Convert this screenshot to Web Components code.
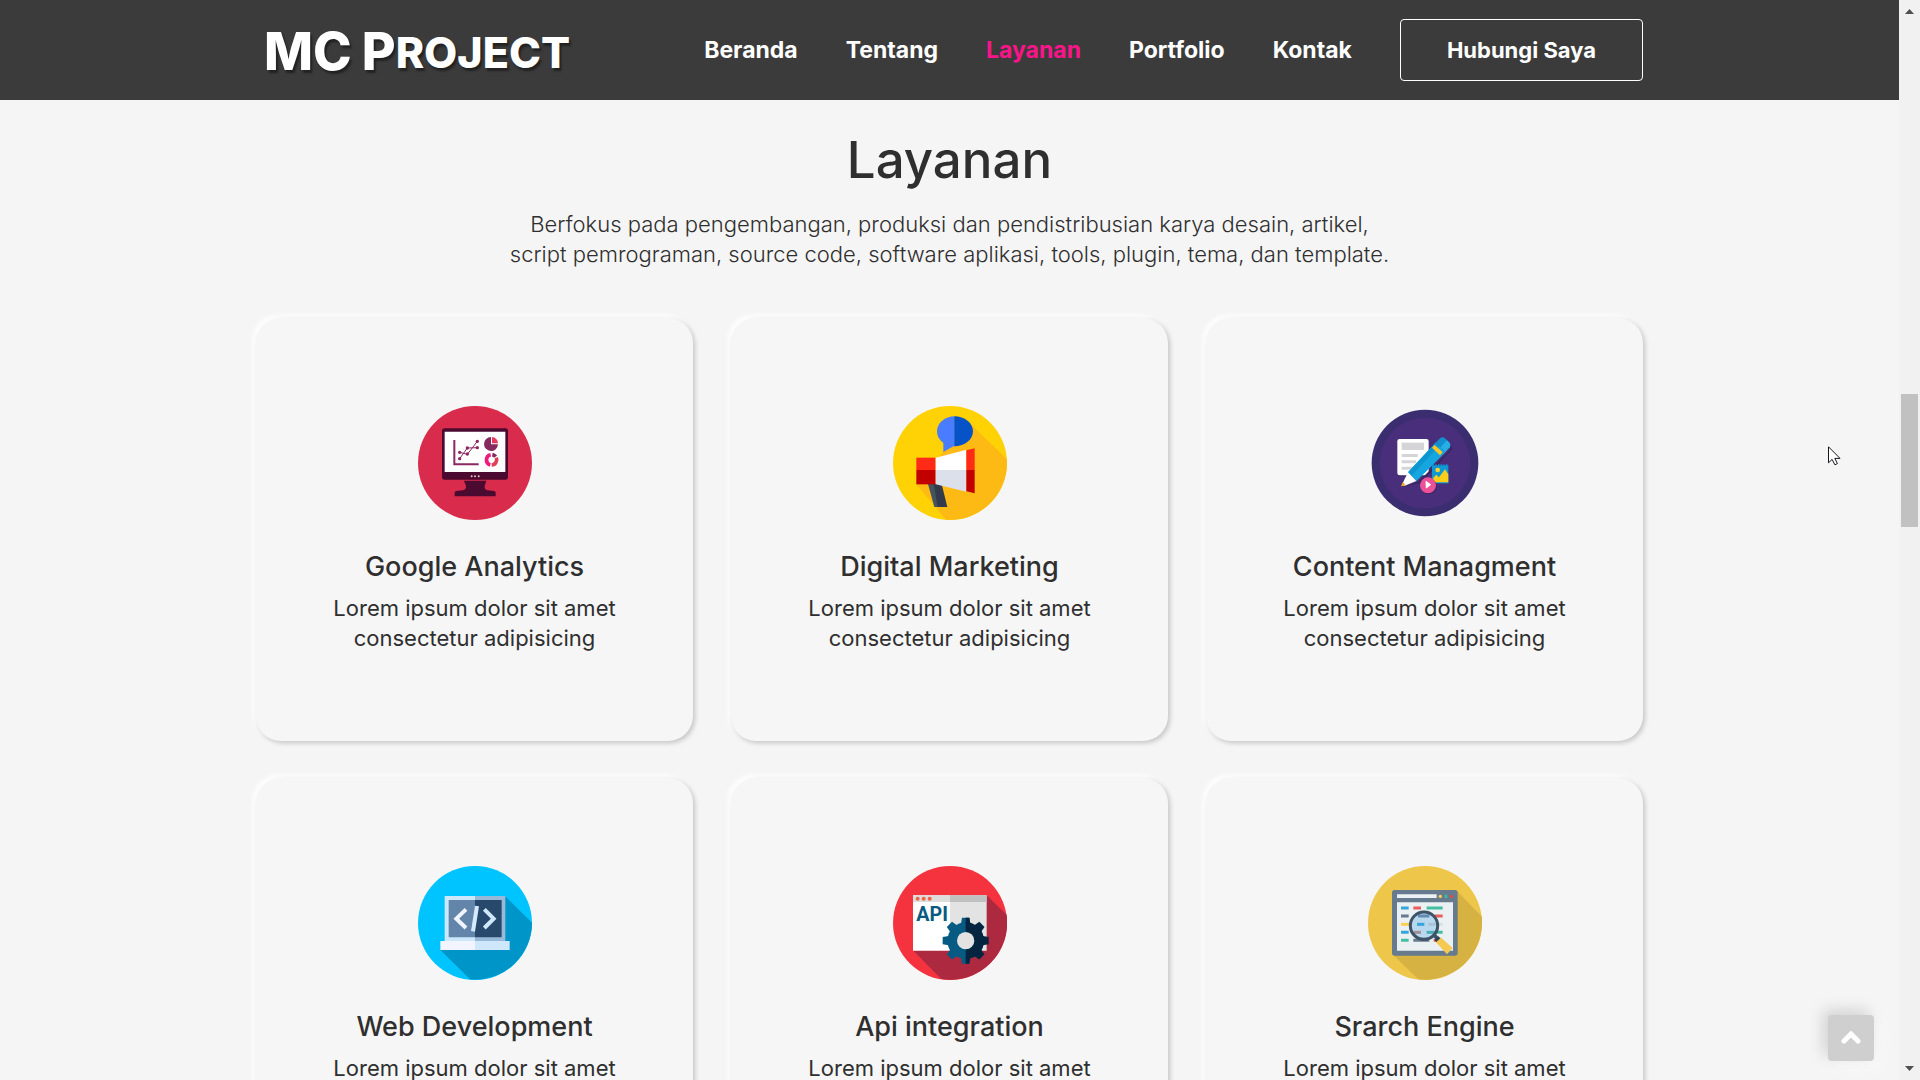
<!DOCTYPE html>
<html lang="id">
<head>
<meta charset="utf-8">
<meta name="viewport" content="width=device-width, initial-scale=1">
<title>MC Project - Layanan</title>
<style>
    body {
        margin: 0;
        font-family: Inter, "Open Sans", sans-serif;
        color: #2f2f2f;
        background: #f5f5f5;
    }
</style>
</head>
<body>
<page-shell>
    <site-header slot="header">
        <nav-link href="#beranda">Beranda</nav-link>
        <nav-link href="#tentang">Tentang</nav-link>
        <nav-link href="#layanan" active>Layanan</nav-link>
        <nav-link href="#portfolio">Portfolio</nav-link>
        <nav-link href="#kontak">Kontak</nav-link>
    </site-header>
    <services-section id="layanan">
        <span slot="title">Layanan</span>
        <span slot="lead">Berfokus pada pengembangan, produksi dan pendistribusian karya desain, artikel,<br>script pemrograman, source code, software aplikasi, tools, plugin, tema, dan template.</span>
        <service-card icon="analytics" name="Google Analytics">Lorem ipsum dolor sit amet consectetur adipisicing</service-card>
        <service-card icon="marketing" name="Digital Marketing">Lorem ipsum dolor sit amet consectetur adipisicing</service-card>
        <service-card icon="content" name="Content Managment">Lorem ipsum dolor sit amet consectetur adipisicing</service-card>
        <service-card icon="web" name="Web Development">Lorem ipsum dolor sit amet consectetur adipisicing</service-card>
        <service-card icon="api" name="Api integration">Lorem ipsum dolor sit amet consectetur adipisicing</service-card>
        <service-card icon="search" name="Srarch Engine">Lorem ipsum dolor sit amet consectetur adipisicing</service-card>
    </services-section>
</page-shell>

<script>
const icons = {
    analytics: `
        <circle cx="225" cy="219" r="171" fill="#d92b4b"/>
        <path d="M164 319v-11q0-4 5-5l19-2q12-3 10-13l-6-16h67l-5 16q-2 10 9 13l19 2q5 1 5 5v11z" fill="#4b0a2f"/>
        <rect x="126" y="115" width="198" height="154" rx="8" fill="#4b0a2f"/>
        <path d="M134 125h182v121H134z" fill="#fff"/>
        <path d="M163 150v73h73" fill="none" stroke="#8c2762" stroke-width="6"/>
        <path d="M179 187l23 6 30-39M179 206l23-32 30-1" fill="none" stroke="#8c2762" stroke-width="3"/>
        <g fill="#8c2762"><circle cx="179" cy="187" r="5"/><circle cx="179" cy="206" r="5"/><circle cx="202" cy="174" r="5"/><circle cx="202" cy="192" r="5"/><circle cx="232" cy="154" r="5"/><circle cx="232" cy="173" r="5"/></g>
        <path d="M273 141a21 21 0 1 0 21 22h-21z" fill="#842a5e"/>
        <path d="M276 160v-19a19 19 0 0 1 18 19z" fill="#e63a5c"/>
        <g fill="none" stroke-width="11"><path d="M271 225a16 16 0 0 1 1-31" stroke="#f0197d"/><path d="M277 194a16 16 0 0 1 10 6" stroke="#842a5e"/><path d="M289 203a16 16 0 0 1-14 22" stroke="#df4055"/></g>
        <g fill="#e6c9c4"><circle cx="215" cy="259" r="3"/><circle cx="225" cy="259" r="3"/><circle cx="236" cy="259" r="3"/></g>`,
    marketing: `
        <circle cx="225" cy="219" r="171" fill="#ffd206"/>
        <path d="M290 106l106 102v11a171 171 0 0 1-183 170L124 283l82-98z" fill="#fdb914"/>
        <path d="M239 79c-29 0-53 20-53 45 0 15 8 27 19 35v27l30-17h4z" fill="#4a7cff"/>
        <path d="M238 79c31 0 56 20 56 45s-25 45-56 45z" fill="#0653c7"/>
        <path d="M159 282h23l16 69h-20z" fill="#44545e"/>
        <path d="M176 282h24l17 69h-29z" fill="#333b4b"/>
        <path d="M124 203h58v37h-58z" fill="#ff2b16"/>
        <path d="M124 240h58v43h-58z" fill="#c20000"/>
        <path d="M182 203l92-24v61h-92z" fill="#fff"/>
        <path d="M182 240h92v65l-92-22z" fill="#dbe0eb"/>
        <path d="M274 181l25-6v65h-25z" fill="#ff2b16"/>
        <path d="M274 240h25v70l-25-6z" fill="#c20000"/>`,
    content: `
        <circle cx="225" cy="219" r="160" fill="#3a2d70"/>
        <circle cx="225" cy="219" r="136" fill="#492f7b"/>
        <path d="M146 259h84l8-6-5-5-18 5-66 1z" fill="#35265f"/>
        <rect x="142" y="147" width="94" height="109" rx="7" fill="#fff"/>
        <path d="M155 158h67v22h-67z" fill="#d5d5d8"/>
        <path d="M155 192h48v9h-48zM155 211h43v9h-43zM155 230h40v9h-40z" fill="#d5d5d8"/>
        <path d="M160 291l44-15 96-95 2-14 6 9-96 103z" fill="#35265f"/>
        <path d="M174 247l84-90 29 29-88 88z" fill="#16a6df"/>
        <path d="M174 247l84-90 10 10-84 91z" fill="#0b96cf"/>
        <path d="M258 157l14-14q6-3 12 1l15 15q4 6 0 13l-13 14z" fill="#118fce"/>
        <path d="M272 171l19-20 8 8q4 6 0 13l-13 14z" fill="#27afe5"/>
        <path d="M246 173l8-8 24 22-8 9z" fill="#fbc625"/>
        <path d="M174 247l25 26-35 14-9-1z" fill="#fff"/>
        <path d="M159 276l8 10-14 3z" fill="#f3af1a"/>
        <path d="M246 226h49v54h-49z" fill="#0e99d5"/>
        <path d="M248 225h46" stroke="#0e99d5" stroke-width="5" stroke-dasharray="4 4"/>
        <circle cx="263" cy="240" r="7" fill="#fbd12b"/>
        <path d="M250 277v-14l9-9 8 8 18-24 10 15v24z" fill="#fbce19"/>
        <circle cx="236" cy="289" r="24" fill="#35265f"/>
        <circle cx="234" cy="286" r="24" fill="#ec5197"/>
        <path d="M228 274l14 10-13 10z" fill="#fff" stroke="#fff" stroke-width="3" stroke-linejoin="round"/>`,
    web: `
        <circle cx="225" cy="219" r="171" fill="#00c4ff"/>
        <path d="M316 139l80 79a171 171 0 0 1-186 170l-89-88z" fill="#0095c8"/>
        <path d="M134 138h91v136h-91z" fill="#cee8fb"/>
        <path d="M225 138h91v136h-91z" fill="#98bad8"/>
        <path d="M146 150h79v112h-79z" fill="#6385a9"/>
        <path d="M225 150h80v112h-80z" fill="#29496c"/>
        <path d="M121 273h104v27H121z" fill="#f2f4fe"/>
        <path d="M225 273h104v27H225z" fill="#cfe7fa"/>
        <path d="M198 178l-29 28 29 28" fill="none" stroke="#f2f5ff" stroke-width="12"/>
        <path d="M253 178l28 28-28 28" fill="none" stroke="#cfe7fa" stroke-width="12"/>
        <path d="M231 168l-12 76" stroke="#d5eaff" stroke-width="12"/>`,
    api: `
        <circle cx="225" cy="219" r="171" fill="#f4333f"/>
        <path d="M335 136l60 58a171 171 0 0 1-196 193l-84-85z" fill="#ad2940"/>
        <path d="M114 136h111v166H114z" fill="#fff"/>
        <path d="M225 136h110v166H225z" fill="#e3e3e3"/>
        <path d="M114 136h111v20H114z" fill="#ddd"/>
        <path d="M225 136h110v20H225z" fill="#c0c0c0"/>
        <g fill="#f06446"><circle cx="128" cy="146" r="6"/><circle cx="146" cy="146" r="6"/><circle cx="164" cy="146" r="6"/></g>
        <text x="124" y="213" font-family="Roboto, sans-serif" font-size="59" font-weight="700" fill="#075b82">API</text>
        <g transform="translate(272 272)">
            <circle r="55" fill="#075b82"/>
            <g fill="#075b82">
                <path d="M-14-51l3-18h22l3 18z"/><path d="M-14-51l3-18h22l3 18z" transform="rotate(180)"/><path d="M-14-51l3-18h22l3 18z" transform="rotate(-90)"/><path d="M-14-51l3-18h22l3 18z" transform="rotate(-45)"/><path d="M-14-51l3-18h22l3 18z" transform="rotate(-135)"/>
            </g>
            <g fill="#03253f">
                <path d="M0-55a55 55 0 0 1 0 110z"/><path d="M0-69h11l3 18H0z"/><path d="M0 69h11l3-18H0z"/><path d="M-14-51l3-18h22l3 18z" transform="rotate(90)"/><path d="M-14-51l3-18h22l3 18z" transform="rotate(45)"/><path d="M-14-51l3-18h22l3 18z" transform="rotate(135)"/>
            </g>
            <circle r="26" fill="#e3e3e3"/>
        </g>`,
    search: `
        <circle cx="225" cy="219" r="171" fill="#eec64a"/>
        <path d="M322 124l74 76v19a171 171 0 0 1-191 169l-76-74z" fill="#d6b243"/>
        <rect x="126" y="120" width="197" height="197" rx="8" fill="#667b8d"/>
        <path d="M141 133h119v11H141z" fill="#ebf0f3"/>
        <circle cx="271" cy="139" r="5" fill="#fbcf53"/><path d="M284 134h8v10h-8z" fill="#3ebc9d"/><circle cx="304" cy="139" r="5" fill="#e5484f"/>
        <path d="M141 157h168v145H141z" fill="#ebf0f3"/>
        <g stroke-width="9">
            <path d="M153 174h23M153 247h23" stroke="#35a5dc"/>
            <path d="M190 174h23M254 198h24M251 271h14" stroke="#ec5d5d"/>
            <path d="M230 174h48M230 247h48M153 271h23" stroke="#45bfa3"/>
            <path d="M153 198h23M190 271h48" stroke="#667b8d"/>
            <path d="M153 223h32" stroke="#fbcf53"/>
            <path d="M254 223h24" stroke="#d8dee3"/>
        </g>
        <circle cx="222" cy="227" r="42" fill="#b8d9ed"/>
        <g stroke-width="9"><path d="M204 198h34" stroke="#628bb4"/><path d="M201 223h22" stroke="#35a5dc"/><path d="M235 223h22" stroke="#a9c3d5"/><path d="M192 247h21" stroke="#a58e95"/><path d="M230 247h27" stroke="#48aeb4"/></g>
        <circle cx="222" cy="227" r="41" fill="none" stroke="#3e5368" stroke-width="9"/>
        <path d="M251 254l14 14" stroke="#3e5368" stroke-width="11"/>
        <path d="M257 276l15-14 36 32-17 19z" fill="#f6c952"/>
        <path d="M253 270l12-11 6 6-12 11z" fill="#2f4357"/>`
};

function render(element, markup) {
    const template = document.createElement('template');
    template.innerHTML = markup;
    element.attachShadow({mode: 'open'}).appendChild(template.content.cloneNode(true));
}

class PageShell extends HTMLElement {
    connectedCallback() {
        render(this, `
            <style>
                :host {
                    display: grid;
                    grid-template-columns: minmax(0, 1fr) 21px;
                    height: 100vh;
                    overflow: hidden;
                }
                .view {
                    position: relative;
                    display: flex;
                    flex-direction: column;
                    min-height: 0;
                    overflow: hidden;
                }
                main {
                    flex: 1;
                    min-height: 0;
                    overflow: hidden;
                }
                to-top {
                    position: absolute;
                    right: 25px;
                    bottom: 19px;
                }
                .cursor {
                    position: absolute;
                    right: 58px;
                    top: 446px;
                }
            </style>
            <div class="view">
                <slot name="header"></slot>
                <main><slot></slot></main>
                <to-top></to-top>
                <svg class="cursor" width="13" height="20" viewBox="0 0 13 20" aria-hidden="true">
                    <path d="M.5.8v16l3.600-3.400 2.800 5.400 2.500-1.200-2.600-5.200h5.200z" fill="#fff" stroke="#16161d"/>
                </svg>
            </div>
            <scroll-rail></scroll-rail>
        `);
    }
}

class SiteHeader extends HTMLElement {
    connectedCallback() {
        render(this, `
            <style>
                :host {
                    display: block;
                    flex: none;
                    background: #3b3b3b;
                    color: #fff;
                }
                header {
                    display: flex;
                    align-items: center;
                    justify-content: space-between;
                    box-sizing: border-box;
                    max-width: 1387px;
                    min-height: 100px;
                    margin: 0 auto;
                }
                .logo {
                    display: flex;
                    align-items: flex-start;
                    margin-left: 8px;
                    padding-top: 4px;
                    font: 800 52px/52px Inter, sans-serif;
                    color: inherit;
                    text-decoration: none;
                    text-shadow: 2px 3px 2px #222;
                }
                .logo .first {
                    margin-right: 10px;
                }
                .logo .small {
                    font-size: 43px;
                    line-height: 52px;
                    text-transform: uppercase;
                }
                nav {
                    display: flex;
                    align-items: center;
                    gap: 48px;
                }
                .contact {
                    box-sizing: border-box;
                    padding: 15px 46px;
                    border: 1px solid #fff;
                    border-radius: 4px;
                    font-size: 22px;
                    font-weight: 700;
                    line-height: 30px;
                    color: inherit;
                    text-decoration: none;
                }
            </style>
            <header>
                <a class="logo" href="#beranda"><span class="first">MC</span><span>P</span><span class="small">roject</span></a>
                <nav>
                    <slot></slot>
                    <a class="contact" href="#kontak">Hubungi Saya</a>
                </nav>
            </header>
        `);
    }
}

class NavLink extends HTMLElement {
    connectedCallback() {
        render(this, `
            <style>
                :host {
                    display: block;
                }
                a {
                    font-size: 23px;
                    font-weight: 700;
                    line-height: 30px;
                    color: #fff;
                    text-decoration: none;
                }
                :host([active]) a {
                    color: #f9148a;
                }
            </style>
            <a href="${this.getAttribute('href')}"><slot></slot></a>
        `);
    }
}

class ServicesSection extends HTMLElement {
    connectedCallback() {
        render(this, `
            <style>
                :host {
                    display: block;
                }
                section {
                    max-width: 1387px;
                    margin: 0 auto;
                    padding-top: 30px;
                }
                h2 {
                    margin: 0;
                    font-size: 51px;
                    font-weight: 500;
                    line-height: 60px;
                    text-align: center;
                }
                p {
                    margin: 19px 0 49px;
                    font-size: 22px;
                    font-weight: 300;
                    line-height: 30px;
                    text-align: center;
                }
                .grid {
                    display: grid;
                    grid-template-columns: repeat(3, minmax(0, 1fr));
                    gap: 37px 38px;
                }
            </style>
            <section>
                <h2><slot name="title"></slot></h2>
                <p><slot name="lead"></slot></p>
                <div class="grid"><slot></slot></div>
            </section>
        `);
    }
}

class ServiceIcon extends HTMLElement {
    connectedCallback() {
        render(this, `
            <style>
                :host {
                    display: block;
                    width: 114px;
                    height: 114px;
                }
                svg {
                    display: block;
                    width: 100%;
                    height: 100%;
                }
            </style>
            <svg viewBox="54 48 342 342" aria-hidden="true">${icons[this.getAttribute('name')]}</svg>
        `);
    }
}

class ServiceCard extends HTMLElement {
    connectedCallback() {
        render(this, `
            <style>
                :host {
                    display: block;
                }
                article {
                    display: flex;
                    flex-direction: column;
                    align-items: center;
                    padding: 88px 64px;
                    border-radius: 25px;
                    background: #f6f6f6;
                    box-shadow: 2px 2px 5px rgba(0, 0, 0, 0.2), -3px -3px 5px #fff;
                    text-align: center;
                }
                h3 {
                    margin: 30px 0 9px;
                    font-size: 27px;
                    font-weight: 500;
                    line-height: 34px;
                }
                p {
                    margin: 0;
                    font-size: 22px;
                    line-height: 30px;
                }
            </style>
            <article>
                <service-icon name="${this.getAttribute('icon')}"></service-icon>
                <h3>${this.getAttribute('name')}</h3>
                <p><slot></slot></p>
            </article>
        `);
    }
}

class ToTop extends HTMLElement {
    connectedCallback() {
        render(this, `
            <style>
                :host {
                    display: block;
                }
                button {
                    display: grid;
                    place-items: center;
                    width: 46px;
                    height: 46px;
                    padding: 0;
                    border: 0;
                    border-radius: 4px;
                    background: #cfcfcf;
                    box-shadow: -5px -5px 15px rgba(0, 0, 0, 0.15), 5px 5px 15px #fafafa;
                }
            </style>
            <button type="button" aria-label="Kembali ke atas">
                <svg width="20" height="14" viewBox="0 0 20 14" aria-hidden="true">
                    <path d="M3 10l7-7 7 7" fill="none" stroke="#fff" stroke-width="5" stroke-linecap="round"/>
                </svg>
            </button>
        `);
    }
}

class ScrollRail extends HTMLElement {
    connectedCallback() {
        render(this, `
            <style>
                :host {
                    display: grid;
                    grid-template-rows: 21px 373fr 133fr 532fr 21px;
                    padding: 0 2px;
                    background: #f1f1f1;
                }
                svg {
                    display: block;
                }
                .thumb {
                    grid-row: 3;
                    background: #c1c1c1;
                }
                .down {
                    grid-row: 5;
                }
            </style>
            <svg width="17" height="21" viewBox="0 0 17 21"><path d="M4 14h9l-4.500-5z" fill="#505050"/></svg>
            <div class="thumb"></div>
            <svg class="down" width="17" height="21" viewBox="0 0 17 21"><path d="M4 7h9l-4.500 5z" fill="#505050"/></svg>
        `);
    }
}

customElements.define('page-shell', PageShell);
customElements.define('site-header', SiteHeader);
customElements.define('nav-link', NavLink);
customElements.define('services-section', ServicesSection);
customElements.define('service-icon', ServiceIcon);
customElements.define('service-card', ServiceCard);
customElements.define('to-top', ToTop);
customElements.define('scroll-rail', ScrollRail);
</script>
</body>
</html>
